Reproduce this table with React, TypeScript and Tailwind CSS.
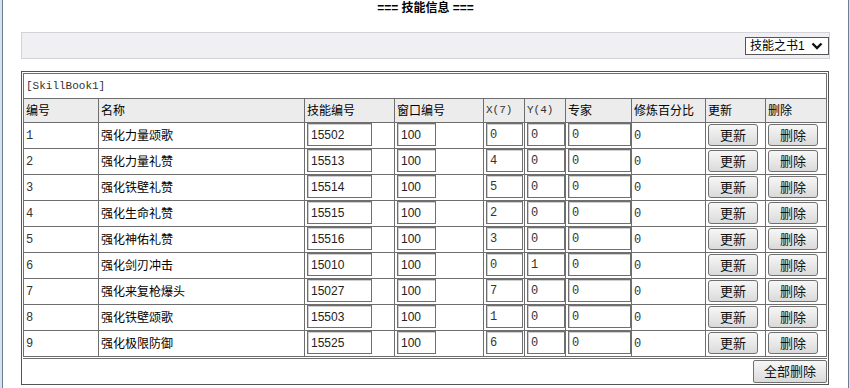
import React from "react"

const rows = [
  { id: 1, name: "强化力量颂歌", skill: "15502", win: "100", x: "0", y: "0", pro: "0", pct: "0" },
  { id: 2, name: "强化力量礼赞", skill: "15513", win: "100", x: "4", y: "0", pro: "0", pct: "0" },
  { id: 3, name: "强化铁壁礼赞", skill: "15514", win: "100", x: "5", y: "0", pro: "0", pct: "0" },
  { id: 4, name: "强化生命礼赞", skill: "15515", win: "100", x: "2", y: "0", pro: "0", pct: "0" },
  { id: 5, name: "强化神佑礼赞", skill: "15516", win: "100", x: "3", y: "0", pro: "0", pct: "0" },
  { id: 6, name: "强化剑刃冲击", skill: "15010", win: "100", x: "0", y: "1", pro: "0", pct: "0" },
  { id: 7, name: "强化来复枪爆头", skill: "15027", win: "100", x: "7", y: "0", pro: "0", pct: "0" },
  { id: 8, name: "强化铁壁颂歌", skill: "15503", win: "100", x: "1", y: "0", pro: "0", pct: "0" },
  { id: 9, name: "强化极限防御", skill: "15525", win: "100", x: "6", y: "0", pro: "0", pct: "0" },
]

const sans = "font-['Liberation_Sans','Noto_Sans_CJK_SC',sans-serif]"
const mono = "font-['Liberation_Mono','Noto_Sans_CJK_SC',monospace] text-[11px] text-[#333]"
const digit = "font-['Liberation_Mono',monospace] text-[12px] text-[#333]"

const cell = "border-r border-b border-[#6e6e6e] flex pl-[2px] overflow-hidden whitespace-nowrap"
const inputBox =
  "h-[23px] border border-[#6f6f6f] bg-white shadow-[inset_1px_1px_0_#cfcfcf] flex items-center pl-[3px] text-[12px] text-[#222]"
const btn =
  "h-[22px] w-[50px] mt-[1px] border border-[#707070] rounded-[3px] bg-gradient-to-b from-[#f7f7f7] to-[#dadada] text-[13px] leading-none text-[#111] flex items-center justify-center"

function Header({ children, className = "" }: { children: React.ReactNode; className?: string }) {
  return <div className={`${cell} h-[24px] items-center bg-[#ececec] ${className}`}>{children}</div>
}

export default function App() {
  return (
    <div className={`w-[850px] h-[388px] bg-white flex overflow-hidden text-[12px] text-black ${sans}`}>
      {/* window frame left */}
      <div className="w-[3px] shrink-0 bg-[#d6e1ef] border-r border-[#6d7e96]" />

      <div className="flex-1 flex flex-col">
        <div className="h-[16px] leading-[16px] text-center font-bold text-[12px]">=== 技能信息 ===</div>

        {/* selector bar */}
        <div className="mt-[16px] ml-[18px] w-[809px] h-[27px] bg-[#f0f0f2] border border-[#d2d2d8] flex items-center justify-end">
          <div className="w-[84px] h-[18px] bg-white border border-[#555] flex items-center pl-[4px] gap-[6px] text-[12px]">
            <span>技能之书1</span>
            <svg width="12" height="8" viewBox="0 0 12 8">
              <polyline points="1.5,1.5 6,6 10.5,1.5" fill="none" stroke="#111" strokeWidth="2.4" />
            </svg>
          </div>
        </div>

        {/* skill table */}
        <div className="mt-[12px] ml-[18px] w-[808px] border border-[#555] p-[1px]">
          <div className={`h-[25px] border-t border-l border-r border-[#6e6e6e] flex items-center pl-[2px] ${mono}`}>
            [SkillBook1]
          </div>

          <div className="grid grid-cols-[75px_206px_90px_89px_41px_41px_66px_74px_60px_61px] border-t border-l border-[#6e6e6e]">
            <Header>编号</Header>
            <Header>名称</Header>
            <Header>技能编号</Header>
            <Header>窗口编号</Header>
            <Header className={mono}>X(7)</Header>
            <Header className={mono}>Y(4)</Header>
            <Header>专家</Header>
            <Header>修炼百分比</Header>
            <Header>更新</Header>
            <Header>删除</Header>

            {rows.map((r) => (
              <React.Fragment key={r.id}>
                <div className={`${cell} h-[26px] items-center ${digit}`}>{r.id}</div>
                <div className={`${cell} h-[26px] items-center`}>{r.name}</div>
                <div className={`${cell} h-[26px] items-start pl-[1px]`}>
                  <div className={`${inputBox} w-[65px]`}>{r.skill}</div>
                </div>
                <div className={`${cell} h-[26px] items-start pl-[1px]`}>
                  <div className={`${inputBox} w-[39px]`}>{r.win}</div>
                </div>
                <div className={`${cell} h-[26px] items-start pl-[1px]`}>
                  <div className={`${inputBox} w-[37px] ${digit}`}>{r.x}</div>
                </div>
                <div className={`${cell} h-[26px] items-start pl-[1px]`}>
                  <div className={`${inputBox} w-[38px] ${digit}`}>{r.y}</div>
                </div>
                <div className={`${cell} h-[26px] items-start pl-[1px]`}>
                  <div className={`${inputBox} w-[63px] ${digit}`}>{r.pro}</div>
                </div>
                <div className={`${cell} h-[26px] items-center ${digit}`}>{r.pct}</div>
                <div className={`${cell} h-[26px] items-start pl-[2px]`}>
                  <button className={btn}>更新</button>
                </div>
                <div className={`${cell} h-[26px] items-start pl-[1px]`}>
                  <button className={btn}>删除</button>
                </div>
              </React.Fragment>
            ))}
          </div>

          <div className="mt-[1px] border-t border-[#6e6e6e] pt-[1px] flex justify-end">
            <button className="h-[23px] w-[74px] border border-[#707070] rounded-[2px] bg-gradient-to-b from-[#f7f7f7] to-[#dadada] text-[13px] leading-none text-[#111] flex items-center justify-center">
              全部删除
            </button>
          </div>
        </div>
      </div>

      {/* window frame right */}
      <div className="w-[2px] shrink-0 bg-[#d6e1ef] border-l border-[#6d7e96]" />
    </div>
  )
}
